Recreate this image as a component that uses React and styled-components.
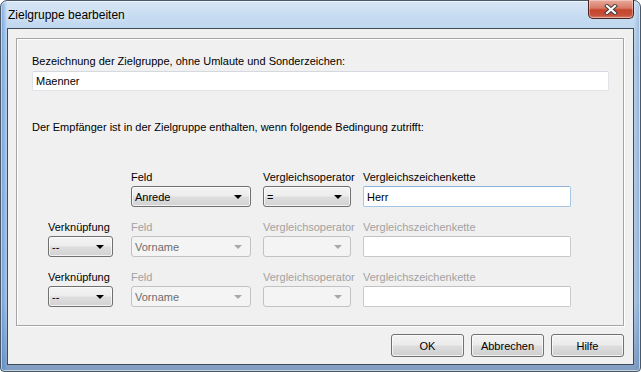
import React from "react";
import styled, { createGlobalStyle } from "styled-components";

const GlobalStyle = createGlobalStyle`
	html, body {
		margin: 0;
		padding: 0;
		background: #fff;
	}
	body {
		font-family: "Liberation Sans", Arial, sans-serif;
	}
`;

const Window = styled.div`
	box-sizing: border-box;
	width: 641px;
	height: 372px;
	display: flex;
	flex-direction: column;
	padding: 0 6px 6px 6px;
	border: 1px solid #4b5868;
	border-radius: 7px 7px 4px 4px;
	background:
		linear-gradient(to right, rgba(60, 125, 210, 0.6), rgba(60, 125, 210, 0) 6px),
		linear-gradient(to left, rgba(80, 125, 185, 0.35), rgba(80, 125, 185, 0) 6px),
		linear-gradient(to bottom, #d6e6f6 0, #c3d9f0 20px, #b7d0ea 60px, #adc8e5 300px, #819ec2 100%);
	box-shadow: inset 0 0 0 1px rgba(255, 255, 255, 0.55);
`;

const TitleBar = styled.div`
	height: 27px;
	display: flex;
	justify-content: space-between;
	align-items: flex-start;
	padding-left: 1px;
`;

const Title = styled.span`
	font-family: "Liberation Sans", Arial, sans-serif;
	font-size: 12px;
	line-height: 14px;
	margin-top: 7px;
	color: #000;
	text-shadow: 0 0 6px rgba(255, 255, 255, 0.9);
`;

const CloseButton = styled.div`
	box-sizing: border-box;
	width: 46px;
	height: 19px;
	margin-top: -1px;
	display: flex;
	align-items: center;
	justify-content: center;
	border: 1px solid #4a2420;
	border-top: none;
	border-radius: 0 0 5px 5px;
	background: linear-gradient(to bottom, #e9a99b 0%, #d77a66 45%, #c5452c 55%, #c8503a 85%, #d98774 100%);
	box-shadow: inset 0 0 0 1px rgba(255, 255, 255, 0.35);
`;

const Client = styled.div`
	flex: 1;
	display: flex;
	flex-direction: column;
	padding: 9px 9px 0 8px;
	background: #f0f0f0;
	border: 1px solid #3d4b5b;
`;

const Group = styled.div`
	box-sizing: border-box;
	height: 288px;
	padding: 16px 14px 0 15px;
	border: 1px solid #a5a5a5;
	box-shadow: 1px 1px 0 #fff, inset 1px 1px 0 #fff;
`;

const Label = styled.div`
	font-size: 11px;
	line-height: 13px;
	white-space: nowrap;
	margin-top: ${(p) => p.$top || 0}px;
	color: ${(p) => (p.$disabled ? "#a2a2a2" : "#000")};
`;

const TextBox = styled.div`
	box-sizing: border-box;
	height: ${(p) => p.$height || 21}px;
	margin-top: ${(p) => p.$top || 0}px;
	padding-left: 3px;
	display: flex;
	align-items: center;
	font-size: 11px;
	color: #000;
	background: #fff;
	border: 1px solid ${(p) => (p.$focus ? "#a6c6e6" : p.$disabled ? "#c9c9c9" : "#dfe3e8")};
	border-top-color: ${(p) => (p.$focus ? "#8fb3d8" : p.$disabled ? "#c2c2c2" : "#d5d9df")};
	border-radius: 2px;
`;

const Condition = styled.div`
	margin-top: 37px;
	margin-left: 16px;
	display: grid;
	grid-template-columns: 71px 120px 88px 208px;
	column-gap: 12px;
	row-gap: 14px;
`;

const Cell = styled.div`
	display: flex;
	flex-direction: column;
	gap: 2px;
`;

const Combo = styled.div`
	box-sizing: border-box;
	position: relative;
	width: ${(p) => p.$width}px;
	height: 21px;
	padding-left: 3px;
	display: flex;
	align-items: center;
	font-size: 11px;
	border-radius: 3px;
	color: ${(p) => (p.$disabled ? "#6d6d6d" : "#000")};
	border: 1px solid ${(p) => (p.$disabled ? "#c2c2c2" : "#707070")};
	background: ${(p) =>
		p.$disabled
			? "#f4f4f4"
			: "linear-gradient(to bottom, #f4f4f4 0%, #ececec 48%, #dedede 52%, #d2d2d2 100%)"};
	box-shadow: ${(p) => (p.$disabled ? "none" : "inset 0 0 0 1px rgba(255,255,255,0.7)")};

	&::after {
		content: "";
		position: absolute;
		right: 8px;
		top: 8px;
		border-left: 4px solid transparent;
		border-right: 4px solid transparent;
		border-top: 4px solid ${(p) => (p.$disabled ? "#a8a8a8" : "#000")};
	}
`;

const ButtonRow = styled.div`
	display: flex;
	justify-content: flex-end;
	gap: 7px;
	margin-top: 8px;
`;

const Button = styled.div`
	box-sizing: border-box;
	width: 73px;
	height: 23px;
	display: flex;
	align-items: center;
	justify-content: center;
	font-size: 11px;
	color: #000;
	border: 1px solid #707070;
	border-radius: 3px;
	background: linear-gradient(to bottom, #f2f2f2 0%, #ebebeb 48%, #dddddd 52%, #cfcfcf 100%);
	box-shadow: inset 0 0 0 1px rgba(255, 255, 255, 0.7);
`;

const rows = [
	{ link: null, field: "Anrede", op: "=", value: "Herr", disabled: false },
	{ link: "--", field: "Vorname", op: "", value: "", disabled: true },
	{ link: "--", field: "Vorname", op: "", value: "", disabled: true },
];

function ConditionRow({ row }) {
	const d = row.disabled;
	return (
		<>
			<Cell>
				{row.link !== null && (
					<>
						<Label>Verknüpfung</Label>
						<Combo $width={65}>{row.link}</Combo>
					</>
				)}
			</Cell>
			<Cell>
				<Label $disabled={d}>Feld</Label>
				<Combo $width={120} $disabled={d}>{row.field}</Combo>
			</Cell>
			<Cell>
				<Label $disabled={d}>Vergleichsoperator</Label>
				<Combo $width={88} $disabled={d}>{row.op}</Combo>
			</Cell>
			<Cell>
				<Label $disabled={d}>Vergleichszeichenkette</Label>
				<TextBox $focus={!d} $disabled={d}>{row.value}</TextBox>
			</Cell>
		</>
	);
}

export default function App() {
	return (
		<>
			<GlobalStyle />
			<Window>
				<TitleBar>
					<Title>Zielgruppe bearbeiten</Title>
					<CloseButton>
						<svg width="14" height="11" viewBox="0 0 14 11">
							<path d="M3 2 L11 9 M11 2 L3 9" stroke="#3a3a3a" strokeWidth="4" strokeLinecap="square" />
							<path d="M3 2 L11 9 M11 2 L3 9" stroke="#fff" strokeWidth="2.2" strokeLinecap="square" />
						</svg>
					</CloseButton>
				</TitleBar>
				<Client>
					<Group>
						<Label>Bezeichnung der Zielgruppe, ohne Umlaute und Sonderzeichen:</Label>
						<TextBox $top={3} $height={20}>Maenner</TextBox>
						<Label $top={30}>
							Der Empfänger ist in der Zielgruppe enthalten, wenn folgende Bedingung zutrifft:
						</Label>
						<Condition>
							{rows.map((row, i) => (
								<ConditionRow key={i} row={row} />
							))}
						</Condition>
					</Group>
					<ButtonRow>
						<Button>OK</Button>
						<Button>Abbrechen</Button>
						<Button>Hilfe</Button>
					</ButtonRow>
				</Client>
			</Window>
		</>
	);
}
